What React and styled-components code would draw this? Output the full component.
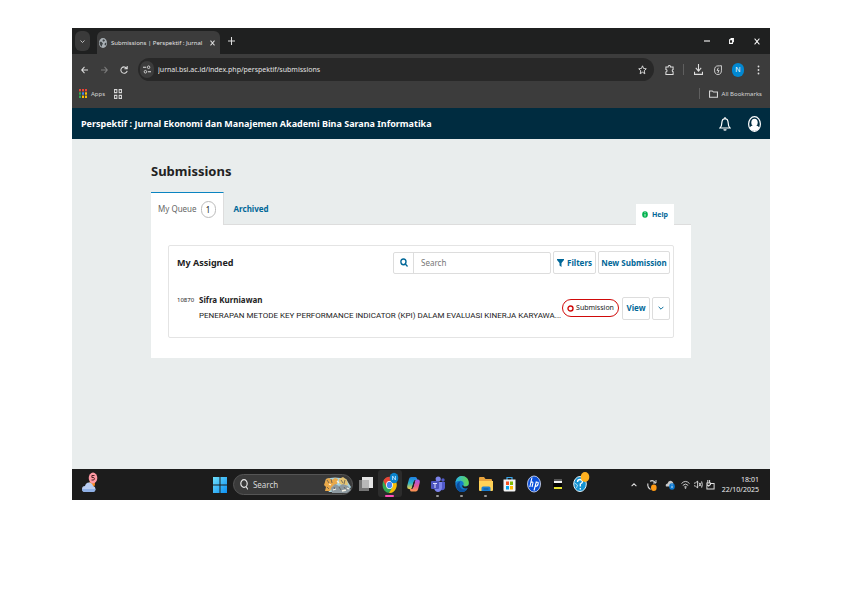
import React, { useState } from 'react';
import styled, { createGlobalStyle } from 'styled-components';

const GlobalStyle = createGlobalStyle`
  * {
    box-sizing: border-box;
  }

  body {
    margin: 0;
    background: #fff;
    font-family: 'Noto Sans', sans-serif;
  }

  button, input {
    font-family: inherit;
    margin: 0;
    padding: 0;
  }

  svg {
    display: block;
    flex-shrink: 0;
  }
`;

const Desktop = styled.div`
  margin: 28px 72px;
  display: flex;
  flex-direction: column;
`;

/* ---------- browser ---------- */

const TitleBar = styled.div`
  display: flex;
  align-items: flex-end;
  height: 26px;
  padding-left: 3px;
  background: #1f2020;
`;

const IconButton = styled.button`
  display: flex;
  align-items: center;
  justify-content: center;
  width: ${(props) => props.$width || 20}px;
  height: 20px;
  border: none;
  border-radius: 6px;
  background: ${(props) => props.$background || 'transparent'};
  color: ${(props) => props.$color || '#dedede'};
  cursor: pointer;
`;

const TabSearch = styled(IconButton)`
  margin: 0 7px 3px 0;
`;

const BrowserTab = styled.div`
  display: flex;
  align-items: center;
  gap: 4px;
  width: 123px;
  height: 23px;
  padding: 0 2px;
  border-radius: 6px 6px 0 0;
  background: #3c3c3c;
`;

const TabTitle = styled.span`
  flex: 1;
  white-space: nowrap;
  font-size: 6px;
  line-height: 12px;
  color: #e3e3e3;
`;

const NewTab = styled(IconButton)`
  margin-bottom: 3px;
`;

const WindowButtons = styled.div`
  display: flex;
  margin-left: auto;
  padding-bottom: 3px;
`;

const Toolbar = styled.div`
  display: flex;
  align-items: center;
  height: 31px;
  padding: 0 2px;
  background: #3c3c3c;
`;

const AddressBar = styled.div`
  display: flex;
  align-items: center;
  flex: 1;
  height: 23px;
  margin: 0 5px 0 4px;
  padding: 0 2px;
  border-radius: 12px;
  background: #282828;
`;

const SiteInfo = styled(IconButton)`
  width: 14px;
  height: 17px;
  border-radius: 8px;
  background: #3c3c3c;
`;

const AddressInput = styled.input`
  flex: 1;
  min-width: 0;
  margin-left: 4px;
  border: none;
  outline: none;
  background: transparent;
  color: #e3e3e3;
  font-size: 7px;
  line-height: 12px;
`;

const Divider = styled.span`
  width: 1px;
  height: 11px;
  margin: 0 ${(props) => props.$space || 4}px;
  background: #5f5f5f;
`;

const Avatar = styled.button`
  width: 12px;
  height: 14px;
  margin: 0 4px;
  border: none;
  border-radius: 6px;
  background: #0288d1;
  color: #fff;
  font-size: 7px;
  line-height: 14px;
`;

const Bookmarks = styled.div`
  display: flex;
  align-items: center;
  height: 23px;
  padding: 0 8px 6px 7px;
  background: #3c3c3c;
`;

const Bookmark = styled.a`
  display: flex;
  align-items: center;
  gap: 4px;
  margin-right: 9px;
  color: #d6d6d6;
  font-size: 6px;
  line-height: 12px;
  text-decoration: none;

  &:last-child {
    margin-right: 0;
  }
`;

const Push = styled.span`
  margin-left: auto;
`;

/* ---------- journal site ---------- */

const SiteHeader = styled.header`
  display: flex;
  align-items: center;
  height: 31px;
  padding: 0 8px 0 9px;
  background: #002c40;
`;

const SiteName = styled.a`
  flex: 1;
  color: #fff;
  font-size: 9px;
  font-weight: 700;
  line-height: 14px;
  text-decoration: none;
`;

const HeaderButton = styled(IconButton)`
  width: 15px;
  margin-left: 15px;
  color: #fff;
`;

const Main = styled.main`
  min-height: 330px;
  padding: 22px 79px 0;
  background: #e9eded;
  color: #222;
`;

const Heading = styled.h1`
  margin: 0 0 11px;
  font-size: 13px;
  line-height: 20px;
`;

const TabRow = styled.div`
  display: flex;
  align-items: flex-end;
  height: 32px;
`;

const Tab = styled.button`
  display: flex;
  align-items: center;
  gap: 4px;
  height: 33px;
  margin-bottom: -1px;
  padding: 0 ${(props) => (props.$active ? 7 : 10)}px;
  border: none;
  border-right: 1px solid ${(props) => (props.$active ? '#ddd' : 'transparent')};
  border-top: 1px solid ${(props) => (props.$active ? '#0a84c1' : 'transparent')};
  background: ${(props) => (props.$active ? '#fff' : 'transparent')};
  color: ${(props) => (props.$active ? '#666' : '#006798')};
  font-size: 8px;
  font-weight: ${(props) => (props.$active ? 400 : 700)};
  line-height: 14px;
  cursor: pointer;
`;

const Count = styled.span`
  width: 15px;
  height: 17px;
  border: 1px solid #bbb;
  border-radius: 8px;
  color: #222;
  font-size: 8px;
  line-height: 15px;
  text-align: center;
`;

const HelpButton = styled.button`
  display: flex;
  align-items: center;
  justify-content: center;
  gap: 4px;
  width: 38px;
  height: 21px;
  margin: 0 17px -1px auto;
  border: none;
  background: #fff;
  color: #006798;
  font-size: 7px;
  font-weight: 700;
  line-height: 12px;
`;

const Panel = styled.section`
  padding: 20px 17px;
  border-top: 1px solid #ddd;
  background: #fff;
`;

const Card = styled.div`
  height: 93px;
  border: 1px solid #e4e4e4;
  border-radius: 2px;
`;

const CardHeader = styled.div`
  display: flex;
  align-items: center;
  gap: 2px;
  padding: 5px 3px 5px 8px;
`;

const CardTitle = styled.h2`
  flex: 1;
  margin: 0;
  font-size: 9px;
  line-height: 14px;
`;

const SearchBox = styled.label`
  display: flex;
  align-items: center;
  width: 158px;
  height: 22px;
  border: 1px solid #ddd;
  border-radius: 2px;
  color: #006798;
`;

const SearchIcon = styled.span`
  display: flex;
  align-items: center;
  justify-content: center;
  width: 20px;
  height: 20px;
  border-right: 1px solid #ddd;
`;

const SearchInput = styled.input`
  flex: 1;
  min-width: 0;
  padding-left: 7px;
  border: none;
  outline: none;
  background: transparent;
  color: #222;
  font-size: 8px;
  line-height: 14px;

  &::placeholder {
    color: #777;
    opacity: 1;
  }
`;

const Button = styled.button`
  display: flex;
  align-items: center;
  justify-content: center;
  gap: 3px;
  width: ${(props) => props.$width}px;
  height: 23px;
  border: 1px solid #ddd;
  border-radius: 2px;
  background: #fff;
  color: #006798;
  font-size: 8px;
  font-weight: 700;
  line-height: 14px;
  white-space: nowrap;
  cursor: pointer;
`;

const Submission = styled.div`
  display: flex;
  align-items: center;
  gap: 2px;
  padding: 13px 3px 0 8px;
`;

const SubmissionId = styled.span`
  align-self: flex-start;
  width: 20px;
  font-size: 6px;
  line-height: 16px;
`;

const SubmissionText = styled.div`
  flex: 1;
  min-width: 0;
  line-height: 16px;
`;

const Author = styled.div`
  font-size: 8px;
  font-weight: 700;
`;

const Title = styled.div`
  white-space: nowrap;
  font-family: Roboto, 'Noto Sans', sans-serif;
  font-size: 8px;
`;

const Stage = styled.span`
  display: flex;
  align-items: center;
  justify-content: center;
  gap: 2px;
  width: 57px;
  height: 18px;
  margin-right: 1px;
  border: 1px solid #d00a0a;
  border-radius: 9px;
  font-size: 7px;
  line-height: 12px;
`;

/* ---------- taskbar ---------- */

const Taskbar = styled.footer`
  display: grid;
  grid-template-columns: 4fr auto 5fr;
  align-items: center;
  height: 31px;
  background: #1c1c1c;
`;

const Weather = styled.button`
  justify-self: start;
  margin: 0 0 3px 9px;
  border: none;
  background: transparent;
`;

const Pinned = styled.div`
  display: flex;
  align-items: center;
`;

const StartButton = styled(IconButton)`
  width: 14px;
  margin-right: 6px;
`;

const TaskSearch = styled.label`
  display: flex;
  align-items: center;
  width: 120px;
  height: 21px;
  margin-right: 1px;
  padding: 0 1px 0 6px;
  border: 1px solid #555;
  border-radius: 11px;
  background: #3a3a3a;
`;

const TaskSearchInput = styled.input`
  flex: 1;
  min-width: 0;
  padding-left: 5px;
  border: none;
  outline: none;
  background: transparent;
  color: #fff;
  font-size: 8px;
  line-height: 14px;

  &::placeholder {
    color: #d8d8d8;
    opacity: 1;
  }
`;

const TaskButton = styled.button`
  display: flex;
  flex-direction: column;
  align-items: center;
  justify-content: flex-end;
  gap: 1px;
  width: 24px;
  height: 27px;
  margin-bottom: 2px;
  border: none;
  border-radius: 3px;
  background: ${(props) => (props.$active ? '#2c2c2c' : 'transparent')};

  &::after {
    content: '';
    width: ${(props) => (props.$active ? 9 : 3)}px;
    height: 2px;
    border-radius: 1px;
    background: ${(props) => (props.$active ? '#ff4fb8' : props.$running ? '#9a9a9a' : 'transparent')};
  }
`;

const Tray = styled.div`
  display: flex;
  align-items: center;
  justify-content: flex-end;
  gap: 3px;
  padding-right: 11px;
`;

const Clock = styled.time`
  margin-left: 4px;
  color: #eee;
  font-size: 7px;
  line-height: 10px;
  text-align: right;
`;

/* line icons share the same stroke setup */
const Line = ({ w = 10, h = 10, box = '0 0 10 10', sw = 1, children }) => (
  <svg width={w} height={h} viewBox={box} fill="none" stroke="currentColor" strokeWidth={sw} preserveAspectRatio="none">
    {children}
  </svg>
);

const Chevron = ({ size = 6 }) => (
  <Line w={size} h={size}>
    <path d="M1 3l4 4 4-4" strokeWidth="1.6" />
  </Line>
);

const Magnifier = ({ w = 8, h = 9, sw = 1.7 }) => (
  <Line w={w} h={h} sw={sw}>
    <circle cx="4.3" cy="4.3" r="3.2" />
    <path d="M6.7 6.7L9.4 9.4" />
  </Line>
);

const Globe = () => (
  <svg width="8" height="10" viewBox="0 0 16 16" preserveAspectRatio="none">
    <circle cx="8" cy="8" r="8" fill="#a9b0b5" />
    <path d="M2 6l3 0 3 3-2 2v3L3 12 1 8zM8 2l4 1-1 2-3 1-1-2zM12 8l3-1-1 4-2 1-1-2z" fill="#3f4447" />
  </svg>
);

const AppsGrid = () => {
  const colors = ['#ea4335', '#ea4335', '#ea4335', '#34a853', '#4285f4', '#fbbc04', '#34a853', '#fbbc04', '#fbbc04'];
  return (
    <svg width="8" height="9" viewBox="0 0 8 9">
      {colors.map((color, i) => (
        <rect key={i} x={(i % 3) * 3} y={Math.floor(i / 3) * 3.3} width="2" height="2.4" fill={color} />
      ))}
    </svg>
  );
};

const ChromeIcon = () => (
  <svg width="19" height="22" viewBox="0 0 19 22">
    <g transform="translate(2 5)">
      <ellipse cx="7.5" cy="8" rx="7" ry="8" fill="#34a853" />
      <path d="M1.4 4A7 8 0 0 1 13.7 4H7.5L4.4 10z" fill="#ea4335" />
      <path d="M13.7 4A7 8 0 0 1 7 16l4-6.5L7.5 4z" fill="#fbbc04" />
      <ellipse cx="7.5" cy="8" rx="3.4" ry="4" fill="#fff" />
      <ellipse cx="7.5" cy="8" rx="2.6" ry="3.2" fill="#4285f4" />
    </g>
    <ellipse cx="14" cy="6" rx="4.3" ry="5.2" fill="#0b84cc" />
    <path d="M12.6 8V4l2.8 4V4" fill="none" stroke="#bfe4ff" strokeWidth=".9" />
  </svg>
);

const CopilotIcon = () => (
  <svg width="13" height="21" viewBox="0 0 13 21">
    <defs>
      <linearGradient id="copilotA" x1="0" y1="0" x2="0" y2="1">
        <stop offset="0" stopColor="#1f7fe6" />
        <stop offset=".5" stopColor="#2bb5c9" />
        <stop offset="1" stopColor="#f5d042" />
      </linearGradient>
      <linearGradient id="copilotB" x1="0" y1="0" x2="0" y2="1">
        <stop offset="0" stopColor="#9a5cf0" />
        <stop offset=".5" stopColor="#e3559b" />
        <stop offset="1" stopColor="#ff9a4c" />
      </linearGradient>
    </defs>
    <path d="M4.200 4h4.300q1.200 0 1.500 1.500l.4 1.500H8.200Q7 7 6.600 9L5 14.500Q4.500 16 3.300 16H2Q-.4 16 .3 12.500L2 6Q2.600 4 4.200 4z" fill="url(#copilotA)" />
    <path d="M8.800 18.500H4.500q-1.200 0-1.500-1.500l-.4-1H4.800Q6 16 6.400 14L8 8Q8.500 6.500 9.700 6.500H11q2.400 0 1.700 3.500L11 16.500q-.6 2-2.200 2z" fill="url(#copilotB)" />
    <path d="M6.800 9h1L6.300 14h-1z" fill="#1c1c1c" />
  </svg>
);

const TeamsIcon = () => (
  <svg width="14" height="21" viewBox="0 0 14 21">
    <circle cx="7.2" cy="6" r="2.6" fill="#7b83eb" />
    <circle cx="12" cy="7" r="1.7" fill="#5059c9" />
    <path d="M9 9h5v6q-1 3-4 2z" fill="#5059c9" />
    <path d="M3 9h8v6q-1 4-4 4t-4-4z" fill="#7b83eb" />
    <rect y="8" width="8" height="8" rx="1" fill="#4b53bc" />
    <path d="M2 10.5h4M4 10.5V15" stroke="#d9dcff" strokeWidth="1" />
  </svg>
);

const EdgeIcon = () => (
  <svg width="14" height="21" viewBox="0 0 14 21">
    <defs>
      <linearGradient id="edgeTop" x1="0" x2="1">
        <stop offset="0" stopColor="#2bb3e8" />
        <stop offset="1" stopColor="#63d94b" />
      </linearGradient>
    </defs>
    <ellipse cx="7" cy="11" rx="6.7" ry="8" fill="#1279cf" />
    <path d="M.4 10C1 5.6 3.4 3 7 3c4 0 6.8 3 6.8 7 0 2.4-1.6 3.6-3.8 3.6-1.6 0-2-.8-1.6-1.6C9.300 10 8 8 5.600 7.800 3 7.700 1 8.600.4 10z" fill="url(#edgeTop)" />
    <path d="M4.500 11c0 4 3 6.500 7.500 5.200C9 20.500 3 19.500 1.700 15 1 11.500 3 9 5.600 8.600 4.800 9.200 4.500 10 4.500 11z" fill="#0c4f9e" />
    <path d="M8.400 12c-.4.800 0 1.600 1.600 1.600 1.600 0 3-.6 3.600-2v3c-3 2-6.600.6-6.400-2z" fill="#1c1c1c" />
  </svg>
);

const FolderIcon = () => (
  <svg width="14" height="21" viewBox="0 0 14 21">
    <path d="M0 5q0-1 1-1h4l1.500 2H12q1 0 1 1v10H0z" fill="#e8a33d" />
    <path d="M0 8h14v9q0 1-1 1H1q-1 0-1-1z" fill="#ffd257" />
    <path d="M2.500 18v-3q0-1.500 1.500-1.500h6q1.500 0 1.500 1.500v3z" fill="#1a7fd4" />
    <path d="M4.500 16h5" stroke="#0b5394" />
  </svg>
);

const StoreIcon = () => (
  <svg width="13" height="21" viewBox="0 0 13 21">
    <path d="M4 7V4.500h5V7" fill="none" stroke="#39a6e8" strokeWidth="1.200" />
    <path d="M.5 6.500h12V17q0 1.500-1.500 1.500H2Q.5 18.500.5 17z" fill="#f4f4f4" />
    <rect x="3" y="8.500" width="3" height="3.500" fill="#f25022" />
    <rect x="7" y="8.500" width="3" height="3.500" fill="#7fba00" />
    <rect x="3" y="13" width="3" height="3.500" fill="#00a4ef" />
    <rect x="7" y="13" width="3" height="3.500" fill="#ffb900" />
  </svg>
);

const HpIcon = () => (
  <svg width="14" height="21" viewBox="0 0 14 21">
    <ellipse cx="7" cy="11" rx="6.500" ry="8" fill="#0b4fd8" stroke="#dfe9ff" strokeWidth=".8" />
    <path d="M5 4.500L2.800 14M3.900 9.500q2.400-1.400 2 .7L5 14M9.400 8.500L7 17.500M9 9.500q2.700-1 2.200 1.200-.4 2.800-3 2.800" fill="none" stroke="#fff" strokeWidth="1.100" />
  </svg>
);

const LayersIcon = () => (
  <svg width="10" height="21" viewBox="0 0 10 21">
    <path d="M1 6h8v2H1z" fill="#555" />
    <path d="M1 8h8v2H1z" fill="#f2f2f2" />
    <path d="M0 10h9v4H0z" fill="#050505" />
    <path d="M1 14h8v2H1z" fill="#e6e22e" />
  </svg>
);

const SupportIcon = () => (
  <svg width="17" height="23" viewBox="0 0 17 23">
    <ellipse cx="7" cy="13" rx="6.300" ry="7.500" fill="#1593d2" stroke="#e4f4fc" strokeWidth="1" />
    <path d="M4.500 11q0-2.500 2.500-2.500t2.500 2.300Q9.500 12 7.300 13v2.500M7.300 17v1.400" fill="none" stroke="#fff" strokeWidth="1.300" />
    <path d="M1.500 12l3 2-1 3" stroke="#a9dcf5" fill="none" />
    <ellipse cx="12" cy="6" rx="4.300" ry="5" fill="#ffb01f" />
  </svg>
);

const TaskViewIcon = () => (
  <svg width="14" height="21" viewBox="0 0 14 21">
    <rect x="0" y="7" width="10" height="11" fill="#767676" />
    <rect x="3" y="4" width="11" height="11" fill="#e4e4e4" />
    <rect x="3" y="7" width="7" height="8" fill="#b8b8b8" />
  </svg>
);

/* tiger artwork at the end of the taskbar search */
const SearchArt = () => (
  <svg width="27" height="17" viewBox="0 0 27 17">
    <path d="M2 3q8-3 20 0l5 8-3 5H5L1 8z" fill="#a9d3de" />
    <path d="M0 9l2-6 3-1 3 2 3-2 3 1-1 5-4 2-3 5H1l1-4z" fill="#e9a94a" />
    <path d="M15 3l4-2 4 3 1 5-5 1-4-3z" fill="#e5c473" />
    <path d="M7 12l4-4 4 2 4-2 5 2 3 4-4 3H8z" fill="#8d99a0" />
    <path d="M3 4l2 3M7 3l1 4M17 4l2 3M21 4l-1 4M3 11l2 2M10 11l1 3M15 11l2 3M20 11l2 3" stroke="#5b5750" strokeWidth=".8" />
    <path d="M5 8l2 1M13 5l2 2M9 14l3-1M18 15l4-1M23 12l2 1" stroke="#f7f4e8" strokeWidth="1.300" />
  </svg>
);

const taskApps = [
  { name: 'Task View', icon: <TaskViewIcon /> },
  { name: 'Chrome', icon: <ChromeIcon />, active: true },
  { name: 'Copilot', icon: <CopilotIcon /> },
  { name: 'Teams', icon: <TeamsIcon />, running: true },
  { name: 'Edge', icon: <EdgeIcon />, running: true },
  { name: 'File Explorer', icon: <FolderIcon />, running: true },
  { name: 'Store', icon: <StoreIcon /> },
  { name: 'HP', icon: <HpIcon /> },
  { name: 'Layers', icon: <LayersIcon /> },
  { name: 'Support', icon: <SupportIcon /> },
];

const Browser = () => {
  const [url, setUrl] = useState('jurnal.bsi.ac.id/index.php/perspektif/submissions');

  return (
    <>
      <TitleBar>
        <TabSearch $width={15} $background="#3a3a3a" aria-label="Search tabs">
          <Chevron size={5} />
        </TabSearch>
        <BrowserTab>
          <Globe />
          <TabTitle>Submissions | Perspektif : Jurnal</TabTitle>
          <IconButton $width={14} aria-label="Close tab">
            <Line w={5} h={6}><path d="M1 1l8 8M9 1L1 9" strokeWidth="2" /></Line>
          </IconButton>
        </BrowserTab>
        <NewTab $width={22} aria-label="New tab">
          <Line w={7} h={8}><path d="M5 0v10M0 5h10" strokeWidth="1.500" /></Line>
        </NewTab>
        <WindowButtons>
          <IconButton $width={25} $color="#fff" aria-label="Minimize">
            <Line w={6} h={6}><path d="M0 5h10" strokeWidth="1.800" /></Line>
          </IconButton>
          <IconButton $width={25} $color="#fff" aria-label="Restore">
            <Line w={5} h={6}><path d="M1 3h6v6H1zM3 1h6v6" strokeWidth="1.800" /></Line>
          </IconButton>
          <IconButton $width={26} $color="#fff" aria-label="Close">
            <Line w={6} h={7}><path d="M1 1l8 8M9 1L1 9" strokeWidth="1.600" /></Line>
          </IconButton>
        </WindowButtons>
      </TitleBar>

      <Toolbar>
        <IconButton aria-label="Back">
          <Line w={7} h={8}><path d="M10 5H1M5 1L1 5l4 4" strokeWidth="1.400" /></Line>
        </IconButton>
        <IconButton $color="#7d7d7d" aria-label="Forward">
          <Line w={7} h={8}><path d="M0 5h9M5 1l4 4-4 4" strokeWidth="1.400" /></Line>
        </IconButton>
        <IconButton aria-label="Reload">
          <Line w={8} h={8}><path d="M8.500 3A4 4 0 1 0 9 6M9 0v3.500H5.500" strokeWidth="1.300" /></Line>
        </IconButton>
        <AddressBar>
          <SiteInfo aria-label="Site information">
            <Line w={8} h={9}>
              <path d="M0 2.500h4M6 7.500h4" strokeWidth="1.300" />
              <circle cx="7" cy="2.500" r="1.500" />
              <circle cx="3" cy="7.500" r="1.500" />
            </Line>
          </SiteInfo>
          <AddressInput aria-label="Address" value={url} onChange={(e) => setUrl(e.target.value)} />
          <IconButton aria-label="Bookmark this page">
            <Line w={9} h={10}><path d="M5 .8l1.200 2.700 3 .3-2.300 2 .7 3L5 7.200 2.400 8.800l.7-3-2.300-2 3-.3z" /></Line>
          </IconButton>
        </AddressBar>
        <IconButton aria-label="Extensions">
          <Line w={9} h={10}><path d="M1 2h2.500q0-1.500 1.300-1.500T6 2h3v2.500Q8 4.500 8 5.500t1 1.200V9.500H1V7q1.300 0 1.300-1.200T1 4.500z" strokeWidth="1.100" /></Line>
        </IconButton>
        <Divider />
        <IconButton aria-label="Downloads">
          <Line w={9} h={11}><path d="M5 0v6M2 3.500l3 3 3-3M.6 7v2.400h8.800V7" strokeWidth="1.200" /></Line>
        </IconButton>
        <IconButton aria-label="Performance">
          <Line w={8} h={10}>
            <path d="M9.300.7v4.500A4.300 4.300 0 1 1 5 .9q2.200 0 4.300-.2z" />
            <path d="M5.500 2.800L3.800 5.400h2.500L4.800 8" />
          </Line>
        </IconButton>
        <Avatar aria-label="Profile">N</Avatar>
        <IconButton aria-label="Menu">
          <svg width="3" height="10" viewBox="0 0 3 10" fill="currentColor">
            <circle cx="1.500" cy="1.500" r=".9" />
            <circle cx="1.500" cy="5" r=".9" />
            <circle cx="1.500" cy="8.500" r=".9" />
          </svg>
        </IconButton>
      </Toolbar>

      <Bookmarks>
        <Bookmark href="#apps"><AppsGrid />Apps</Bookmark>
        <Bookmark href="#grid" aria-label="Tab groups">
          <Line w={8} h={10}><path d="M.6.600h3v3h-3zM6.400.600h3v3h-3zM.6 6.400h3v3h-3zM6.400 6.400h3v3h-3z" strokeWidth="1.200" /></Line>
        </Bookmark>
        <Push />
        <Divider $space={9} />
        <Bookmark href="#bookmarks">
          <Line w={9} h={8}><path d="M.6 1.200h3L5 2.600h4.400V9H.6z" strokeWidth="1.200" /></Line>
          All Bookmarks
        </Bookmark>
      </Bookmarks>
    </>
  );
};

const Submissions = () => {
  const [search, setSearch] = useState('');

  return (
    <Main>
      <Heading>Submissions</Heading>
      <TabRow>
        <Tab $active>My Queue <Count>1</Count></Tab>
        <Tab>Archived</Tab>
        <HelpButton>
          <svg width="6" height="7" viewBox="0 0 6 7">
            <ellipse cx="3" cy="3.500" rx="2.800" ry="3.300" fill="#00b24e" />
            <path d="M3 3v2.500M3 1.200v1" stroke="#fff" strokeWidth=".8" />
          </svg>
          Help
        </HelpButton>
      </TabRow>
      <Panel>
        <Card>
          <CardHeader>
            <CardTitle>My Assigned</CardTitle>
            <SearchBox>
              <SearchIcon><Magnifier /></SearchIcon>
              <SearchInput
                type="text"
                aria-label="Search submissions"
                placeholder="Search"
                value={search}
                onChange={(e) => setSearch(e.target.value)}
              />
            </SearchBox>
            <Button $width={43}>
              <svg width="7" height="8" viewBox="0 0 7 8" fill="currentColor">
                <path d="M0 0h7v1L4.500 4v4L2.500 6.500V4L0 1z" />
              </svg>
              Filters
            </Button>
            <Button $width={72}>New Submission</Button>
          </CardHeader>
          <Submission>
            <SubmissionId>10870</SubmissionId>
            <SubmissionText>
              <Author>Sifra Kurniawan</Author>
              <Title>PENERAPAN METODE KEY PERFORMANCE INDICATOR (KPI) DALAM EVALUASI KINERJA KARYAWA...</Title>
            </SubmissionText>
            <Stage>
              <svg width="7" height="7" viewBox="0 0 7 7">
                <circle cx="3.500" cy="3.500" r="2.500" fill="none" stroke="#d00a0a" strokeWidth="1.400" />
              </svg>
              Submission
            </Stage>
            <Button $width={28}>View</Button>
            <Button $width={18} aria-label="More details"><Chevron /></Button>
          </Submission>
        </Card>
      </Panel>
    </Main>
  );
};

const App = () => {
  return (
    <>
      <GlobalStyle />
      <Desktop>
        <Browser />
        <SiteHeader>
          <SiteName href="#home">Perspektif : Jurnal Ekonomi dan Manajemen Akademi Bina Sarana Informatika</SiteName>
          <HeaderButton aria-label="Notifications">
            <Line w={12} h={15} box="0 0 12 15">
              <path d="M6 1v1.500M1 12q1.800-1.500 1.800-5Q3 2.800 6 2.600 9 2.800 9.200 7q0 3.500 1.800 5zM4.600 13.500q1.400 1.200 2.800 0" strokeWidth="1.200" />
            </Line>
          </HeaderButton>
          <HeaderButton aria-label="User menu">
            <svg width="13" height="16" viewBox="0 0 13 16">
              <ellipse cx="6.500" cy="8" rx="5.900" ry="7.300" fill="#002c40" stroke="#fff" strokeWidth="1.200" />
              <ellipse cx="6.500" cy="6.600" rx="3.200" ry="3.800" fill="#fff" />
              <path d="M1.500 12q1.200-2 3-2.400h4q1.800.4 3 2.400-1.800 3-5 3t-5-3z" fill="#fff" />
            </svg>
          </HeaderButton>
        </SiteHeader>
        <Submissions />

        <Taskbar>
          <Weather aria-label="Weather">
            <svg width="18" height="22" viewBox="0 0 18 22">
              <circle cx="11" cy="12" r="3" fill="#f58a1f" />
              <path d="M4 20q-3 0-3-3t3-3q1-4 4.500-3.500Q11.500 11 12 14q2.500.5 2.500 3t-2.500 3z" fill="#b9cdf2" />
              <path d="M1 17h13.500q0 3-2.500 3H4q-3 0-3-3z" fill="#8fb0e6" />
              <ellipse cx="12" cy="6" rx="4.300" ry="5.400" fill="#ff99a4" />
              <path d="M13.500 3.500h-2.600v2q2.600-.5 2.600 1.300T10.500 8" fill="none" stroke="#3a1518" strokeWidth=".9" />
            </svg>
          </Weather>
          <Pinned>
            <StartButton aria-label="Start">
              <svg width="14" height="16" viewBox="0 0 14 16">
                <defs>
                  <linearGradient id="start" x1="0" y1="0" x2="1" y2="1">
                    <stop offset="0" stopColor="#6fe0fb" />
                    <stop offset="1" stopColor="#0c8ff2" />
                  </linearGradient>
                </defs>
                <path d="M0 0h6.500v7.500H0zM7.500 0H14v7.500H7.500zM0 8.500h6.500V16H0zM7.500 8.500H14V16H7.500z" fill="url(#start)" />
              </svg>
            </StartButton>
            <TaskSearch>
              <svg width="8" height="11" viewBox="0 0 8 11" fill="none" stroke="#e6e6e6" strokeWidth="1.200">
                <ellipse cx="4" cy="4.500" rx="3.200" ry="3.800" />
                <path d="M6 7.500l2 3" />
              </svg>
              <TaskSearchInput type="text" aria-label="Search Windows" placeholder="Search" />
              <SearchArt />
            </TaskSearch>
            {taskApps.map((app) => (
              <TaskButton key={app.name} aria-label={app.name} $active={app.active} $running={app.running}>
                {app.icon}
              </TaskButton>
            ))}
          </Pinned>
          <Tray>
            <IconButton $width={15} aria-label="Show hidden icons">
              <Line w={6} h={6}><path d="M1 7l4-4 4 4" strokeWidth="1.700" /></Line>
            </IconButton>
            <IconButton $width={15} aria-label="Updates">
              <svg width="10" height="12" viewBox="0 0 10 12">
                <path d="M8.500 4Q6.500.500 3 2.200M1 4.500q-1 4 2.500 6" fill="none" stroke="#ddd" strokeWidth="1.100" />
                <path d="M9 1v3H6" fill="none" stroke="#ddd" strokeWidth=".9" />
                <ellipse cx="6.800" cy="8.700" rx="2.800" ry="3.300" fill="#ff9a14" />
              </svg>
            </IconButton>
            <IconButton $width={15} aria-label="OneDrive">
              <svg width="10" height="11" viewBox="0 0 10 11">
                <path d="M1 7.500Q0 5 2.500 4.500 3.500 1 6.500 2q2 .8 2 3.500v2z" fill="#c9c9c9" />
                <ellipse cx="7" cy="7.500" rx="2.800" ry="3.300" fill="#0b78d0" />
                <path d="M7 7v2M7 5.500v.8" stroke="#fff" strokeWidth=".8" />
              </svg>
            </IconButton>
            <IconButton $width={10} aria-label="Network">
              <Line w={9} h={9}>
                <path d="M.5 4Q5-.800 9.500 4M2 6q3-3 6 0M3.800 7.600q1.200-1 2.400 0" />
                <circle cx="5" cy="8.800" r=".6" />
              </Line>
            </IconButton>
            <IconButton $width={9} aria-label="Volume">
              <Line w={9} h={9}>
                <path d="M0 3.500h1.500L4 1v8L1.500 6.500H0M5.500 3l2.500 4M5.500 7L8 3M8.500 1.500q1.500 3.500 0 7" />
              </Line>
            </IconButton>
            <IconButton $width={9} aria-label="Battery">
              <Line w={9} h={10}>
                <path d="M4.500 3.500H9V9H1V5M2 0v3M4 0v3M1 3h4v1.500L3 6 1 4.500z" strokeWidth="1.100" />
              </Line>
            </IconButton>
            <Clock dateTime="2025-10-22T18:01">
              18:01
              <br />
              22/10/2025
            </Clock>
          </Tray>
        </Taskbar>
      </Desktop>
    </>
  );
};

export default App;
